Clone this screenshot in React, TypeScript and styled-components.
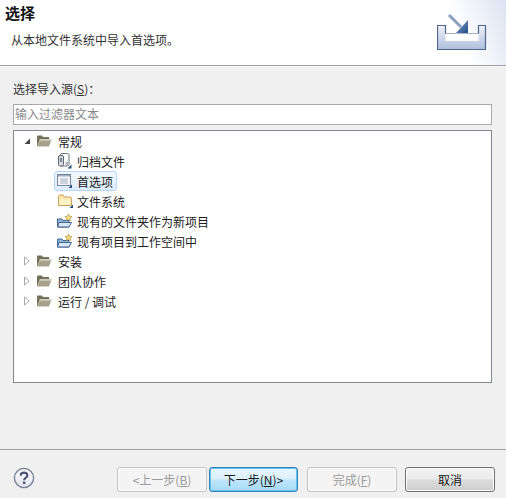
import React from 'react';
import styled, {createGlobalStyle} from 'styled-components';

const GlobalStyle = createGlobalStyle`
  html, body {
    margin: 0;
    padding: 0;
    background: #f0f0f0;
  }
  body {
    font-family: "Noto Sans CJK SC", "Liberation Sans", sans-serif;
    font-size: 12px;
    color: #1a1a1a;
  }
`

const OpenArrow = () => (
    <svg width="8" height="8" viewBox="0 0 8 8">
        <path d="M7 1.5 V7 H1.5 Z" fill="#454545"/>
    </svg>
)

const ClosedArrow = () => (
    <svg width="8" height="10" viewBox="0 0 8 10">
        <path d="M1.5 1 L6 5 L1.5 9 Z" fill="#fff" stroke="#a8a8a8"/>
    </svg>
)

const FolderIcon = () => (
    <svg width="16" height="14" viewBox="0 0 16 14">
        <path d="M1 2.5 L1.5 1.5 H6 L7 3 H13 V5 H4 L1.5 12 H1 Z" fill="#77705c"/>
        <path d="M4 5.5 H15.5 L13 12.5 H1.5 Z" fill="#a8a28c"/>
        <path d="M4.2 5.5 H15.5 L15 7 H3.7 Z" fill="#c9c5b4"/>
    </svg>
)

const ArchiveIcon = () => (
    <svg width="16" height="18" viewBox="0 0 16 18">
        <rect x="3.5" y="1.5" width="8.5" height="12.5" rx="1.5" fill="#fff" stroke="#6b7078"/>
        <rect x="1.5" y="3.5" width="5" height="10.5" rx="1.5" fill="#d8dce2" stroke="#5d6470"/>
        <rect x="3" y="6" width="2" height="4" fill="#7d8590"/>
        <path d="M8.5 10 H11 V13 H8.5 Z" fill="#aeb6c2"/>
        <path d="M14.5 12.5 V16.5 H10.5 Z" fill="#27497c"/>
    </svg>
)

const PrefsIcon = () => (
    <svg width="18" height="16" viewBox="0 0 18 16">
        <rect x="1.5" y="1.5" width="13" height="11" fill="#f4f7fb" stroke="#77839a"/>
        <rect x="2" y="2" width="12" height="1.5" fill="#a3b0c4"/>
        <path d="M4 6 H12 M4 8 H12 M4 10 H12" stroke="#a2adbd"/>
        <path d="M16 11.5 V15 H12.5 Z" fill="#27497c"/>
    </svg>
)

const YellowFolderIcon = () => (
    <svg width="17" height="16" viewBox="0 0 17 16">
        <path d="M1.5 3.5 Q1.5 2 3 2 H6 L7.5 4 H13 Q14.5 4 14.5 5.5 V12.5 H1.5 Z" fill="#fbe6a6" stroke="#c6a35a"/>
        <path d="M2 6 H14 V12 H2 Z" fill="#fdf0c4"/>
        <path d="M16 11.5 V15 H12.5 Z" fill="#27497c"/>
    </svg>
)

const ProjectIcon = () => (
    <svg width="18" height="16" viewBox="0 0 18 16">
        <path d="M1.5 6 H6 L7 7.5 H13 V14 H1.5 Z" fill="#8fb4dc" stroke="#46658f"/>
        <path d="M3 9.5 H15.5 L13 14 H1.5 Z" fill="#d6e6f5" stroke="#46658f"/>
        <path d="M12.5 1 L13.6 3.3 L16 3.6 L14.2 5.2 L14.7 7.6 L12.5 6.4 L10.3 7.6 L10.8 5.2 L9 3.6 L11.4 3.3 Z" fill="#f7df85" stroke="#b3933f" strokeWidth="0.7"/>
    </svg>
)

const HelpIcon = () => (
    <svg width="22" height="22" viewBox="0 0 22 22">
        <defs>
            <linearGradient id="helpFill" x1="0" y1="0" x2="0" y2="1">
                <stop offset="0" stopColor="#ffffff"/>
                <stop offset="1" stopColor="#dfe3ee"/>
            </linearGradient>
        </defs>
        <circle cx="11" cy="11" r="9.6" fill="url(#helpFill)" stroke="#7b8199" strokeWidth="1.4"/>
        <path d="M7.7 8.6 Q7.8 5.6 11 5.6 Q14.4 5.6 14.4 8.2 Q14.4 9.8 12.6 10.8 Q11.1 11.6 11.1 13.2" fill="none" stroke="#4d5273" strokeWidth="2.1"/>
        <rect x="9.9" y="14.6" width="2.4" height="2.4" fill="#4d5273"/>
    </svg>
)

const WizardIcon = () => (
    <svg width="50" height="42" viewBox="0 0 50 42">
        <defs>
            <linearGradient id="trayFill" x1="0" y1="0" x2="0" y2="1">
                <stop offset="0" stopColor="#eef2f9"/>
                <stop offset="1" stopColor="#aebfdc"/>
            </linearGradient>
            <linearGradient id="arrowFill" x1="0" y1="0" x2="1" y2="1">
                <stop offset="0" stopColor="#8fa9cc"/>
                <stop offset="1" stopColor="#1f4a86"/>
            </linearGradient>
        </defs>
        <path d="M0.5 16.5 H8.5 V24.5 H41.5 V16.5 H48.5 V40.5 H0.5 Z" fill="url(#trayFill)" stroke="#51668c" strokeWidth="1.2"/>
        <path d="M8.5 24.5 H41.5 V32 H8.5 Z" fill="#fff"/>
        <path d="M12 6 L24 18" stroke="#8aa0c0" strokeWidth="3"/>
        <path d="M31 11 V24 H19 Z" fill="url(#arrowFill)"/>
    </svg>
)

type TreeNode = {
    label: string;
    depth: 0 | 1;
    arrow?: 'open' | 'closed';
    icon: React.ReactNode;
    selected?: boolean;
}

const nodes: TreeNode[] = [
    {label: '常规', depth: 0, arrow: 'open', icon: <FolderIcon/>},
    {label: '归档文件', depth: 1, icon: <ArchiveIcon/>},
    {label: '首选项', depth: 1, icon: <PrefsIcon/>, selected: true},
    {label: '文件系统', depth: 1, icon: <YellowFolderIcon/>},
    {label: '现有的文件夹作为新项目', depth: 1, icon: <ProjectIcon/>},
    {label: '现有项目到工作空间中', depth: 1, icon: <ProjectIcon/>},
    {label: '安装', depth: 0, arrow: 'closed', icon: <FolderIcon/>},
    {label: '团队协作', depth: 0, arrow: 'closed', icon: <FolderIcon/>},
    {label: '运行 / 调试', depth: 0, arrow: 'closed', icon: <FolderIcon/>},
]

const App = () => {
    return (
        <Dialog>
            <GlobalStyle/>
            <Header>
                <HeaderText>
                    <Title>选择</Title>
                    <Subtitle>从本地文件系统中导入首选项。</Subtitle>
                </HeaderText>
                <HeaderArt>
                    <WizardIcon/>
                </HeaderArt>
            </Header>
            <Body>
                <SourceLabel>选择导入源(<u>S</u>)：</SourceLabel>
                <FilterInput readOnly value="输入过滤器文本"/>
                <Tree>
                    {nodes.map((node) => (
                        <Row key={node.label} $depth={node.depth}>
                            {node.arrow && (
                                <ArrowSlot>
                                    {node.arrow === 'open' ? <OpenArrow/> : <ClosedArrow/>}
                                </ArrowSlot>
                            )}
                            <Item $selected={node.selected} $depth={node.depth}>
                                <IconSlot>{node.icon}</IconSlot>
                                <RowLabel>{node.label}</RowLabel>
                            </Item>
                        </Row>
                    ))}
                </Tree>
            </Body>
            <Footer>
                <HelpButton><HelpIcon/></HelpButton>
                <Buttons>
                    <NavGroup>
                        <Button disabled>&lt;上一步(<u>B</u>)</Button>
                        <Button $primary $width={89}>下一步(<u>N</u>)&gt;</Button>
                    </NavGroup>
                    <Button disabled>完成(<u>F</u>)</Button>
                    <Button>取消</Button>
                </Buttons>
            </Footer>
        </Dialog>
    );
};

export default App;

const Dialog = styled.div`
  width: 506px;
  height: 498px;
  display: flex;
  flex-direction: column;
  overflow: hidden;
  background: #f0f0f0;
`

const Header = styled.header`
  height: 65px;
  flex: none;
  display: flex;
  justify-content: space-between;
  background: #fff;
  border-bottom: 1px solid #a0a0a0;
`

const HeaderText = styled.div`
  display: flex;
  flex-direction: column;
`

const Title = styled.h1`
  margin: 3px 0 0 5px;
  font-size: 15px;
  line-height: 20px;
  font-weight: 700;
  color: #111;
`

const Subtitle = styled.p`
  margin: 8px 0 0 11px;
  font-size: 12px;
  line-height: 18px;
  color: #333;
`

const HeaderArt = styled.div`
  width: 106px;
  display: flex;
  align-items: flex-start;
  justify-content: flex-end;
  padding: 9px 19px 0 0;
  box-sizing: border-box;
  background: linear-gradient(70deg, #fff 55%, #e8ecf6 85%, #dbe2f1 100%);
`

const Body = styled.main`
  flex: none;
  height: 382px;
  padding: 0 14px 0 13px;
  display: flex;
  flex-direction: column;
  border-top: 1px solid #f8f8f8;
`

const SourceLabel = styled.label`
  margin-top: 13px;
  height: 18px;
  line-height: 18px;
  font-size: 12px;
  color: #333;
`

const FilterInput = styled.input`
  box-sizing: border-box;
  margin-top: 6px;
  height: 21px;
  width: 100%;
  padding: 0 1px 2px;
  border: 1px solid #a9a9a9;
  border-radius: 0;
  outline: none;
  background: #fff;
  font-family: inherit;
  font-size: 12px;
  color: #8a8a8a;
`

const Tree = styled.div`
  box-sizing: border-box;
  margin-top: 5px;
  height: 253px;
  width: 100%;
  border: 1px solid #828790;
  background: #fff;
  display: flex;
  flex-direction: column;
`

const Row = styled.div<{ $depth: number }>`
  height: 20px;
  flex: none;
  display: flex;
  align-items: center;
  padding-left: ${(props) => (props.$depth === 0 ? 7 : 40)}px;
`

const ArrowSlot = styled.span`
  width: 12px;
  flex: none;
  display: flex;
  align-items: center;
  justify-content: center;
  svg {
    display: block;
  }
`

const Item = styled.div<{ $selected?: boolean; $depth: number }>`
  box-sizing: border-box;
  height: 20px;
  display: flex;
  align-items: center;
  gap: ${(props) => (props.$depth === 0 ? 5 : 3)}px;
  padding: 0 3px 0 1px;
  border: 1px solid transparent;
  border-radius: 3px;
  ${(props) => props.$selected && `
    border-color: #b8d6fb;
    background: linear-gradient(#f2f8ff, #dcecfd);
  `}
`

const IconSlot = styled.span`
  width: 18px;
  height: 18px;
  flex: none;
  display: flex;
  align-items: center;
  justify-content: center;
  svg {
    display: block;
  }
`

const RowLabel = styled.span`
  line-height: 17px;
  font-size: 12px;
  color: #222;
  white-space: nowrap;
`

const Footer = styled.footer`
  flex: 1;
  border-top: 1px solid #a0a0a0;
  display: flex;
  align-items: flex-start;
  justify-content: space-between;
  padding: 17px 11px 0 13px;
`

const HelpButton = styled.span`
  display: block;
  width: 22px;
  height: 22px;
`

const Buttons = styled.div`
  display: flex;
  gap: 8px;
`

const NavGroup = styled.div`
  display: flex;
  gap: 2px;
  margin-right: 1px;
`

const Button = styled.button<{ $primary?: boolean; $width?: number }>`
  box-sizing: border-box;
  width: ${(props) => props.$width ?? 90}px;
  height: 25px;
  padding: 0;
  border-radius: 3px;
  font-family: inherit;
  font-size: 12px;
  line-height: 18px;
  color: #1a1a1a;
  border: 1px solid #707070;
  background: linear-gradient(#f2f2f2 0%, #ebebeb 48%, #dcdcdc 52%, #cfcfcf 100%);
  box-shadow: inset 0 0 0 1px #fcfcfc;
  ${(props) => props.$primary && `
    border-color: #3c7fb1;
    background: linear-gradient(#eaf6fd 0%, #d9f0fc 48%, #bee6fd 52%, #a7d9f5 100%);
    box-shadow: inset 0 0 0 1px #5fc4ee;
  `}
  &:disabled {
    color: #9a9a9a;
    border-color: #c4c4c4;
    background: #f4f4f4;
    box-shadow: inset 0 0 0 1px #fbfbfb;
  }
`
